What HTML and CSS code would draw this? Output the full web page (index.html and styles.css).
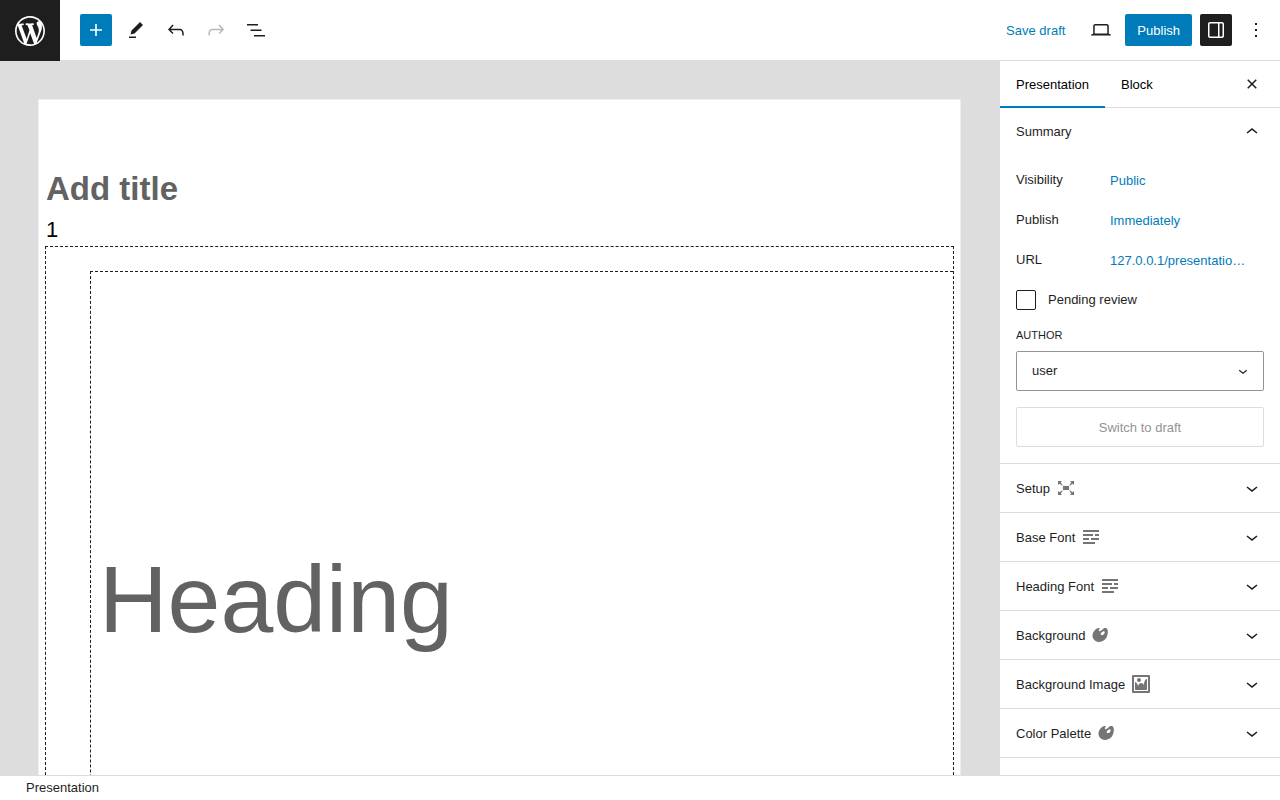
FILE: index.html
```html
<!DOCTYPE html>
<html lang="en">
<head>
<meta charset="utf-8">
<title>Edit Presentation</title>
<link rel="stylesheet" href="styles.css">
</head>
<body>
<svg class="sprite" aria-hidden="true">
  <symbol id="down" viewBox="0 0 24 24"><path d="M17.5 11.6L12 16l-5.5-4.4.9-1.2L12 14l4.5-3.6 1 1.2z"/></symbol>
  <symbol id="text" viewBox="0 0 20 20"><path d="M18 3v2H2V3h16zm-6 4v2H2V7h10zm6 0v2h-4V7h4zM8 11v2H2v-2h6zm10 0v2h-8v-2h8zm-4 4v2H2v-2h12z"/></symbol>
  <symbol id="art" viewBox="0 0 20 20"><path d="M8.55 3.06c1.01.34-1.95 2.01-.1 3.13 1.04.63 3.31-2.22 4.45-2.86.97-.54 2.67-.65 3.53 1.23 1.09 2.38.14 8.57-3.79 11.06-3.97 2.5-8.97 1.23-10.7-2.66-2.01-4.53 3.12-11.09 6.61-9.9zm1.21 6.45c.73 1.64 4.7-.5 3.79-2.8-.59-1.49-4.48 1.25-3.79 2.8z"/></symbol>
</svg>
<div class="editor">
  <header class="topbar">
    <a class="logo" href="#" aria-label="View posts">
      <svg viewBox="-2 -2 24 24"><path d="M20 10c0-5.51-4.49-10-10-10C4.48 0 0 4.49 0 10c0 5.52 4.48 10 10 10 5.51 0 10-4.48 10-10zM7.78 15.37L4.37 6.22c.55-.02 1.17-.08 1.17-.08.5-.06.44-1.13-.06-1.11 0 0-1.45.11-2.37.11-.18 0-.37 0-.58-.01C4.12 2.69 6.87 1.11 10 1.11c2.33 0 4.45.87 6.05 2.34-.68-.11-1.65.39-1.65 1.58 0 .74.45 1.36.9 2.1.35.61.55 1.36.55 2.46 0 1.49-1.4 5-1.4 5l-3.03-8.37c.54-.02.82-.17.82-.17.5-.05.44-1.25-.06-1.22 0 0-1.44.12-2.38.12-.87 0-2.33-.12-2.33-.12-.5-.03-.56 1.2-.06 1.22l.92.08 1.26 3.41zM17.41 10c.24-.64.74-1.87.43-4.25.7 1.29 1.05 2.71 1.05 4.25 0 3.29-1.73 6.24-4.4 7.78.97-2.59 1.94-5.2 2.92-7.78zM6.1 18.09C3.12 16.65 1.11 13.53 1.11 10c0-1.3.23-2.48.72-3.59C3.25 10.3 4.67 14.2 6.1 18.09zm4.03-6.63l2.58 6.98c-.86.29-1.76.45-2.71.45-.79 0-1.57-.11-2.29-.33.81-2.38 1.62-4.74 2.42-7.1z"/></svg>
    </a>
    <div class="tools">
      <button class="tool primary" aria-label="Toggle block inserter"><svg class="icon" viewBox="0 0 24 24"><path d="M18 11.2h-5.2V6h-1.6v5.2H6v1.6h5.2V18h1.6v-5.2H18z"/></svg></button>
      <button class="tool" aria-label="Tools"><svg class="icon" viewBox="0 0 24 24"><path d="m19 7-3-3-8.500 8.500-1 4 4-1L19 7Zm-7 11.500H5V20h7v-1.500Z"/></svg></button>
      <button class="tool" aria-label="Undo"><svg class="icon" viewBox="0 0 24 24"><path d="M18.300 11.700c-.6-.6-1.400-.9-2.300-.9H6.700l2.900-3.300-1.100-1-4.500 5L8.500 16l1-1-2.700-2.700H16c.5 0 .9.2 1.300.5 1 1 1 3.400 1 4.500v.3h1.500v-.2c0-1.500 0-4.300-1.500-5.700z"/></svg></button>
      <button class="tool" aria-label="Redo" disabled><svg class="icon" viewBox="0 0 24 24"><path d="M15.600 6.500l-1.100 1 2.900 3.300H8c-.9 0-1.700.3-2.300.9-1.400 1.500-1.400 4.200-1.400 5.600v.2h1.500v-.3c0-1.100 0-3.500 1-4.500.3-.3.7-.5 1.300-.5h9.200L14.500 15l1.100 1.100 4.600-4.600-4.600-5z"/></svg></button>
      <button class="tool" aria-label="Document overview"><svg class="icon" viewBox="0 0 24 24"><path d="M3 6h11v1.500H3V6Zm3.500 5.500h11V13h-11v-1.500ZM21 17H10v1.500h11V17Z"/></svg></button>
    </div>
    <div class="actions">
      <button class="link save">Save draft</button>
      <button class="tool" aria-label="Preview"><svg class="icon" viewBox="0 0 24 24"><path d="M20.500 16h-.7V8c0-1.100-.9-2-2-2H6.200c-1.100 0-2 .9-2 2v8h-.7c-.8 0-1.500.7-1.500 1.500h20c0-.8-.7-1.500-1.500-1.500zM5.700 8c0-.3.2-.5.5-.5h11.600c.3 0 .5.2.5.5v7.600H5.700V8z"/></svg></button>
      <button class="publish">Publish</button>
      <button class="tool pressed" aria-label="Settings"><svg class="icon" viewBox="0 0 24 24"><path d="M18 4H6c-1.100 0-2 .9-2 2v12c0 1.100.9 2 2 2h12c1.100 0 2-.9 2-2V6c0-1.100-.9-2-2-2zm-4 14.500H6c-.3 0-.5-.2-.5-.5V6c0-.3.2-.5.5-.5h8v13zm4.500-.5c0 .3-.2.5-.5.5h-2.500v-13H18c.3 0 .5.2.5.5v12z"/></svg></button>
      <button class="tool" aria-label="Options"><svg class="icon" viewBox="0 0 24 24"><path d="M13 19h-2v-2h2v2zm0-6h-2v-2h2v2zm0-6h-2V5h2v2z"/></svg></button>
    </div>
  </header>
  <div class="body">
    <main class="canvas">
      <div class="page">
        <h1 class="title" contenteditable="true">Add title</h1>
        <p class="number">1</p>
        <div class="slides">
          <section class="slide">
            <h2 class="heading" contenteditable="true">Heading</h2>
          </section>
        </div>
      </div>
    </main>
    <aside class="sidebar">
      <div class="tabs">
        <button class="tab active">Presentation</button>
        <button class="tab">Block</button>
        <button class="close" aria-label="Close settings"><svg class="icon" viewBox="0 0 24 24"><path d="M12 13.060l3.712 3.713 1.061-1.060L13.061 12l3.712-3.712-1.060-1.060L12 10.938 8.288 7.227l-1.061 1.060L10.939 12l-3.712 3.712 1.060 1.061L12 13.061z"/></svg></button>
      </div>
      <section class="panel">
        <button class="toggle summary" aria-expanded="true">Summary<svg class="icon chevron" viewBox="0 0 24 24"><path d="M6.500 12.400L12 8l5.500 4.400-.9 1.200L12 10l-4.500 3.600-1-1.200z"/></svg></button>
        <div class="fields">
          <div class="row"><span>Visibility</span><button class="link">Public</button></div>
          <div class="row"><span>Publish</span><button class="link">Immediately</button></div>
          <div class="row"><span>URL</span><button class="link">127.0.0.1/presentatio…</button></div>
          <div class="check"><input type="checkbox" id="pending"><label for="pending">Pending review</label></div>
          <label class="caption" for="author">Author</label>
          <div class="select">
            <select id="author"><option>user</option></select>
            <svg class="arrow" aria-hidden="true"><use href="#down"/></svg>
          </div>
          <button class="draft" disabled>Switch to draft</button>
        </div>
      </section>
      <section class="panel"><button class="toggle">Setup<svg class="dash" viewBox="0 0 20 20"><path d="M7 8h6v4H7zm-5 5v4h4l-1.200-1.200L7 12l-3.800 2.200M14 17h4v-4l-1.200 1.200L13 12l2.200 3.800M14 3l1.300 1.300L13 8l3.800-2.200L18 7V3M6 3H2v4l1.200-1.200L7 8 4.700 4.300"/></svg><svg class="icon chevron"><use href="#down"/></svg></button></section>
      <section class="panel"><button class="toggle">Base Font<svg class="dash"><use href="#text"/></svg><svg class="icon chevron"><use href="#down"/></svg></button></section>
      <section class="panel"><button class="toggle">Heading Font<svg class="dash"><use href="#text"/></svg><svg class="icon chevron"><use href="#down"/></svg></button></section>
      <section class="panel"><button class="toggle">Background<svg class="dash"><use href="#art"/></svg><svg class="icon chevron"><use href="#down"/></svg></button></section>
      <section class="panel"><button class="toggle">Background Image<svg class="dash" viewBox="0 0 20 20"><path d="M2.250 1h15.500c.69 0 1.250.56 1.250 1.250v15.500c0 .69-.56 1.250-1.250 1.250H2.250C1.560 19 1 18.440 1 17.750V2.250C1 1.560 1.560 1 2.250 1zM17 17V3H3v14h14zM10 6c0-1.100-.9-2-2-2s-2 .9-2 2 .9 2 2 2 2-.9 2-2zm3 5s0-6 3-6v10c0 .55-.45 1-1 1H5c-.55 0-1-.45-1-1V8c2 0 3 4 3 4s1-3 3-3 3 2 3 2z"/></svg><svg class="icon chevron"><use href="#down"/></svg></button></section>
      <section class="panel"><button class="toggle">Color Palette<svg class="dash"><use href="#art"/></svg><svg class="icon chevron"><use href="#down"/></svg></button></section>
    </aside>
  </div>
  <footer class="footer">Presentation</footer>
</div>
</body>
</html>
```
FILE: styles.css
```css
* { box-sizing: border-box; }

body {
  margin: 0;
  font: 13px/18px "Liberation Sans", Arial, sans-serif;
  color: #1e1e1e;
  background: #fff;
}

button, select {
  font: inherit;
  color: inherit;
  background: none;
  border: 0;
  margin: 0;
  padding: 0;
}

svg { display: block; fill: currentColor; }

.sprite { display: none; }
.icon { width: 24px; height: 24px; }
.dash { width: 20px; height: 20px; margin-left: 6px; color: #757575; }

.editor { display: flex; flex-direction: column; height: 100vh; }

.topbar {
  display: flex;
  align-items: flex-start;
  flex: none;
  height: 61px;
  border-bottom: 1px solid #ddd;
}

.logo {
  display: grid;
  place-items: center;
  width: 60px;
  height: 61px;
  background: #1e1e1e;
  color: #fff;
}
.logo svg { width: 36px; height: 36px; }

.tools { display: flex; gap: 8px; padding: 14px 20px; }

.tool {
  display: grid;
  place-items: center;
  width: 32px;
  height: 32px;
  border-radius: 2px;
}
.tool.primary { background: #007cba; color: #fff; }
.tool.pressed { background: #1e1e1e; color: #fff; }
.tool:disabled { opacity: .3; }

.actions {
  display: flex;
  gap: 8px;
  margin-left: auto;
  padding: 14px 8px;
}

.link, .publish, .draft, .toggle { line-height: 19px; }

.link { color: #007cba; text-align: left; }
.save { padding: 0 12px; }

.publish {
  height: 32px;
  padding: 0 12px;
  border-radius: 2px;
  background: #007cba;
  color: #fff;
}

.body { display: flex; flex: 1; min-height: 0; }

.canvas {
  flex: 1;
  min-width: 0;
  display: flex;
  overflow: hidden;
  padding: 38px 39px 0 38px;
  background: #ddd;
}

.page {
  flex: 1;
  min-width: 0;
  overflow: hidden;
  padding: 69px 6px 0;
  border: 1px solid #eee;
  border-bottom: 0;
  background: #fff;
}

.title {
  margin: 0;
  font-size: 33px;
  line-height: 40px;
  color: #626262;
}

.number {
  margin: 8px 0 3px;
  font-size: 22px;
  line-height: 26px;
  color: #000;
}

.title, .number { padding-left: 1px; }

.slides {
  height: 1000px;
  padding: 24px 0 0 44px;
  border: 1px dashed #1e1e1e;
}

.slide {
  display: flex;
  align-items: center;
  height: 656px;
  padding: 0 8px;
  border: 1px dashed #1e1e1e;
  border-right: 0;
}

.heading {
  margin: 0;
  font-size: 95px;
  line-height: 116px;
  font-weight: 400;
  color: #626262;
}

.sidebar {
  flex: none;
  width: 280px;
  overflow: hidden;
}

.tabs {
  display: flex;
  height: 47px;
  border-bottom: 1px solid #ddd;
}

.tab { height: 47px; padding: 0 16px; color: #000; }
.tab.active { box-shadow: inset 0 -2px #007cba; }

.close { margin: 0 16px 0 auto; }

.panel { border-bottom: 1px solid #ddd; }

.toggle {
  display: flex;
  align-items: center;
  width: 100%;
  height: 48px;
  padding: 0 16px;
  text-align: left;
}
.summary { line-height: 18px; }
.chevron { margin-left: auto; }

.fields { padding: 4px 16px 16px; }

.row {
  display: grid;
  grid-template-columns: 94px 1fr;
  align-items: center;
  height: 40px;
}

.check {
  display: flex;
  align-items: center;
  gap: 12px;
  height: 40px;
}
.check input {
  appearance: none;
  width: 20px;
  height: 20px;
  margin: 0;
  border: 1px solid #1e1e1e;
  border-radius: 2px;
}

.caption {
  display: block;
  margin: 6px 0 7px;
  font-size: 11px;
  text-transform: uppercase;
}

.select { display: grid; align-items: center; }
.select > * { grid-area: 1 / 1; }
.select select {
  appearance: none;
  width: 100%;
  height: 40px;
  padding: 0 15px;
  border: 1px solid #949494;
  border-radius: 2px;
}
.arrow {
  justify-self: end;
  width: 18px;
  height: 18px;
  margin-right: 12px;
  pointer-events: none;
}

.draft {
  width: 100%;
  height: 40px;
  margin-top: 16px;
  border: 1px solid #ddd;
  border-radius: 2px;
  color: #949494;
}

.footer {
  flex: none;
  height: 25px;
  padding: 3px 26px;
  border-top: 1px solid #ddd;
}
```
